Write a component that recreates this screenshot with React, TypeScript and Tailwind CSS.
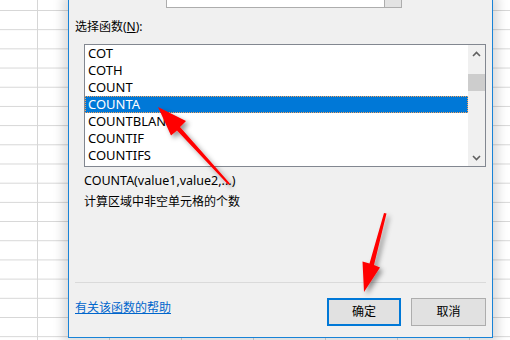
const items = ['COT', 'COTH', 'COUNT', 'COUNTA', 'COUNTBLANK', 'COUNTIF', 'COUNTIFS'];

const font = { fontFamily: '"Noto Sans", "Noto Sans CJK SC", sans-serif' };

const App = () => {
  return (
    <div
      className="relative w-[510px] h-[340px] overflow-hidden bg-white bg-[linear-gradient(#d6d6d6_1px,transparent_1px),linear-gradient(90deg,#d6d6d6_1px,transparent_1px)] bg-[size:72px_19.2px] bg-[position:37px_10px]"
      style={font}
    >
      {/* dialog window */}
      <div className="absolute left-[68px] top-0 w-[425px] h-[338px] bg-[#f0f0f0] border-x border-b border-[#1883d7] shadow-[0_0_10px_5px_rgba(0,0,0,0.15)] px-[6px] text-[12px] text-black">
        {/* input tail of the previous row */}
        <div className="ml-[91px] w-[236px] h-[8px] flex border-x border-b border-[#adadad]">
          <div className="flex-1 bg-white" />
          <div className="w-[17px] bg-[#e3e3e3] border-l border-[#adadad]" />
        </div>

        <div className="mt-[11px] leading-[16px]">
          选择函数(<span className="underline">N</span>):
        </div>

        {/* function list */}
        <div className="mt-[9px] ml-[9px] h-[123px] flex border border-[#828790] bg-white text-[13px]">
          <div className="flex-1 flex flex-col">
            {items.map((name) =>
              name === 'COUNTA' ? (
                <div
                  key={name}
                  className="h-[17px] leading-[15px] pl-[2px] bg-[#0078d7] text-white border border-dotted border-[#f5a25a]"
                >
                  {name}
                </div>
              ) : (
                <div key={name} className="h-[17px] leading-[17px] pl-[3px]">
                  {name}
                </div>
              )
            )}
          </div>
          <div className="w-[17px] bg-[#f0f0f0] flex flex-col">
            <div className="h-[17px] flex items-center justify-center">
              <svg width="9" height="6" viewBox="0 0 9 6">
                <path d="M1 5 L4.5 1.5 L8 5" fill="none" stroke="#606060" strokeWidth="1.6" />
              </svg>
            </div>
            <div className="mt-[12px] h-[17px] bg-[#cdcdcd]" />
            <div className="flex-1" />
            <div className="h-[17px] flex items-center justify-center">
              <svg width="9" height="6" viewBox="0 0 9 6">
                <path d="M1 1 L4.5 4.5 L8 1" fill="none" stroke="#606060" strokeWidth="1.6" />
              </svg>
            </div>
          </div>
        </div>

        <div className="mt-[3px] ml-[9px] leading-[21px]">
          <div className="text-[12.5px]">COUNTA(value1,value2,...)</div>
          <div>计算区域中非空单元格的个数</div>
        </div>

        <div className="mt-[70px] h-px bg-[#dadada]" />

        <div className="mt-[15px] flex items-start">
          <a className="mt-[2px] leading-[16px] text-[#0066cc] underline">有关该函数的帮助</a>
          <div className="flex-1" />
          <button className="w-[74px] h-[28px] bg-[#e1e1e1] border-2 border-[#0078d7]">确定</button>
          <button className="ml-[10px] w-[75px] h-[28px] bg-[#e1e1e1] border border-[#adadad]">取消</button>
        </div>
      </div>

      {/* annotation arrows */}
      <svg className="absolute inset-0 pointer-events-none" width="510" height="340">
        <defs>
          <filter id="sh" x="-50%" y="-50%" width="200%" height="200%">
            <feDropShadow dx="3" dy="3" stdDeviation="2.5" floodColor="#000" floodOpacity="0.4" />
          </filter>
        </defs>
        <g filter="url(#sh)" fill="#ff0000">
          <polygon points="229.7,183.3 228.3,184.7 177,130.5 171,135.5 158,107 186,121 180,127" />
          <polygon points="384,213 386.5,213.6 374,265 380,267.5 364,292 362.5,261.5 369.5,263.5" />
        </g>
      </svg>
    </div>
  );
};

export default App;
